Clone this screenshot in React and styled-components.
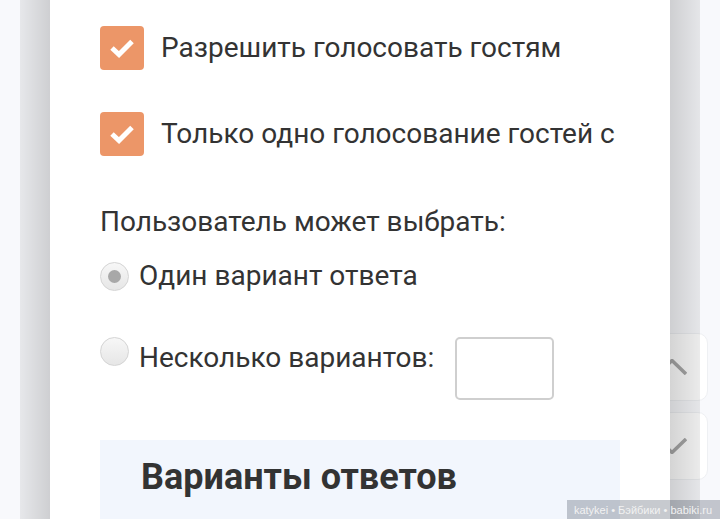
import React from "react";
import styled, { createGlobalStyle } from "styled-components";

const Global = createGlobalStyle`
  html, body { margin: 0; padding: 0; }
  body {
    background: #f8f9fc;
    overflow: hidden;
    font-family: Roboto, "Noto Sans", sans-serif;
    color: #333;
  }
`;

const Page = styled.div`
  position: relative;
  height: 519px;
  overflow: hidden;
`;

const Frame = styled.div`
  position: relative;
  z-index: 2;
  margin-left: 20px;
  width: 680px;
  height: 519px;
  padding: 0 30px;
  box-sizing: border-box;
  background: linear-gradient(
    to right,
    rgba(0, 0, 0, 0.07) 0,
    rgba(0, 0, 0, 0.17) 30px,
    rgba(0, 0, 0, 0.17) 650px,
    rgba(0, 0, 0, 0.08) 680px
  );
`;

const Panel = styled.div`
  background: #fff;
  height: 100%;
  padding: 26px 50px 0 50px;
  box-sizing: border-box;
  display: flex;
  flex-direction: column;
  overflow: hidden;
`;

const CheckRow = styled.div`
  display: flex;
  align-items: center;
  gap: 17px;
  height: 44px;
  margin-bottom: ${(p) => p.$mb || 0}px;
`;

const Box = styled.div`
  width: 44px;
  height: 44px;
  flex: none;
  border-radius: 4px;
  background: #ec9668;
  display: flex;
  align-items: center;
  justify-content: center;
`;

const Label = styled.span`
  font-size: 28px;
  line-height: 30px;
  white-space: nowrap;
  color: #333;
`;

const Prompt = styled.div`
  font-size: 28px;
  line-height: 30px;
  color: #333;
  margin-top: ${(p) => p.$mt}px;
`;

const RadioRow = styled.div`
  display: flex;
  align-items: ${(p) => (p.$top ? "flex-start" : "center")};
  gap: 10px;
  margin-top: ${(p) => p.$mt}px;
`;

const Radio = styled.div`
  width: 29px;
  height: 29px;
  flex: none;
  box-sizing: border-box;
  border-radius: 50%;
  border: 1px solid #d4d4d4;
  background: linear-gradient(to bottom, #f7f7f7, #e6e6e6);
  display: flex;
  align-items: center;
  justify-content: center;
  &::after {
    content: "";
    display: ${(p) => (p.$checked ? "block" : "none")};
    width: 13px;
    height: 13px;
    border-radius: 50%;
    background: #a8a8a8;
  }
`;

const RadioLabel = styled.span`
  font-size: 28px;
  line-height: 30px;
  color: #333;
  white-space: nowrap;
  margin-top: ${(p) => p.$mt || 0}px;
`;

const NumInput = styled.div`
  width: 99px;
  height: 63px;
  box-sizing: border-box;
  border: 2px solid #cfcfcf;
  border-radius: 5px;
  margin-left: 11px;
  flex: none;
`;

const Section = styled.div`
  margin-top: ${(p) => p.$mt}px;
  background: #f2f6fd;
  padding: 17px 41px 20px;
  flex: 1;
`;

const Heading = styled.h2`
  margin: 0;
  font-size: 36px;
  line-height: 40px;
  font-weight: 700;
  color: #333;
`;

const SideButtons = styled.div`
  position: absolute;
  z-index: 1;
  right: 12px;
  top: 333px;
  display: flex;
  flex-direction: column;
  gap: 11px;
`;

const SideButton = styled.div`
  width: 72px;
  height: 68px;
  box-sizing: border-box;
  background: #fff;
  border: 1px solid #eef0f3;
  border-radius: 10px;
  display: flex;
  align-items: center;
  justify-content: center;
`;

const Watermark = styled.div`
  position: absolute;
  z-index: 5;
  right: 0;
  bottom: 0;
  height: 19px;
  padding: 0 8px 0 7px;
  display: flex;
  align-items: center;
  background: rgba(40, 50, 70, 0.26);
  color: #f2f2f2;
  font-family: "Liberation Sans", Arial, sans-serif;
  font-size: 11px;
`;

const Check = () => (
  <svg width="26" height="20" viewBox="0 0 26 20">
    <polyline
      points="3,10 10,16.5 23,3.5"
      fill="none"
      stroke="#fff"
      strokeWidth="5"
      strokeLinecap="butt"
      strokeLinejoin="miter"
    />
  </svg>
);

const Chevron = ({ up }) => (
  <svg width="30" height="16" viewBox="0 0 30 16">
    <polyline
      points={up ? "1,15 15,1.5 29,15" : "1,1 15,14.5 29,1"}
      fill="none"
      stroke="#a9a9a9"
      strokeWidth="3.5"
    />
  </svg>
);

export default function App() {
  return (
    <Page>
      <Global />
      <SideButtons>
        <SideButton>
          <Chevron up />
        </SideButton>
        <SideButton>
          <Chevron />
        </SideButton>
      </SideButtons>
      <Frame>
        <Panel>
          <CheckRow $mb={42}>
            <Box>
              <Check />
            </Box>
            <Label>Разрешить голосовать гостям</Label>
          </CheckRow>
          <CheckRow>
            <Box>
              <Check />
            </Box>
            <Label>Только одно голосование гостей с</Label>
          </CheckRow>
          <Prompt $mt={51}>Пользователь может выбрать:</Prompt>
          <RadioRow $mt={24}>
            <Radio $checked />
            <RadioLabel>Один вариант ответа</RadioLabel>
          </RadioRow>
          <RadioRow $mt={46} $top>
            <Radio />
            <RadioLabel $mt={6}>Несколько вариантов:</RadioLabel>
            <NumInput />
          </RadioRow>
          <Section $mt={40}>
            <Heading>Варианты ответов</Heading>
          </Section>
        </Panel>
      </Frame>
      <Watermark>katykei • Бэйбики • babiki.ru</Watermark>
    </Page>
  );
}
